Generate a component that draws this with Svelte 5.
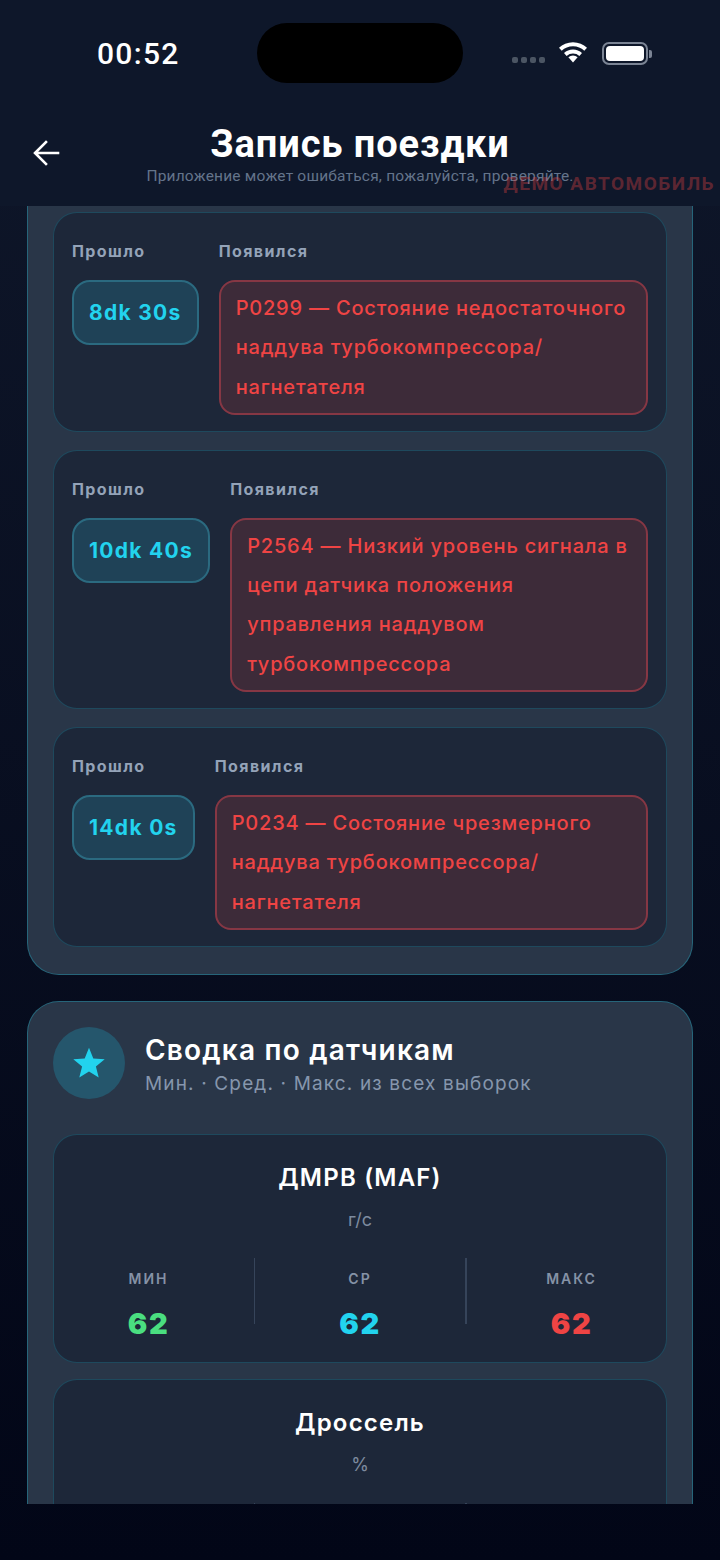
<script>
	const faults = [
		{ time: '8dk 30s', text: 'P0299 — Состояние недостаточного наддува турбокомпрессора/ нагнетателя' },
		{ time: '10dk 40s', text: 'P2564 — Низкий уровень сигнала в цепи датчика положения управления наддувом турбокомпрессора' },
		{ time: '14dk 0s', text: 'P0234 — Состояние чрезмерного наддува турбокомпрессора/ нагнетателя' }
	];

	const sensors = [
		{ name: 'ДМРВ (MAF)', unit: 'г/с', min: 62, avg: 62, max: 62 },
		{ name: 'Дроссель', unit: '%', min: 14, avg: 14, max: 14 }
	];
</script>

<div class="screen">
	<header>
		<div class="status">
			<span class="clock">00:52</span>
			<div class="island"></div>
			<div class="status-right">
				<div class="dots"><i></i><i></i><i></i><i></i></div>
				<svg class="wifi" viewBox="0 0 32 24" width="32" height="24">
					<path d="M16 23.5l-4.6-5.2a6.6 6.6 0 0 1 9.2 0z" fill="#fff" />
					<path d="M16 10.6c3.5 0 6.6 1.3 9 3.5l-2.6 2.9a9.6 9.6 0 0 0-12.8 0L7 14.1c2.400-2.200 5.500-3.500 9-3.500z" fill="#fff" />
					<path d="M16 3.200c5.500 0 10.400 2.100 14 5.600l-2.700 3A16.300 16.300 0 0 0 16 7.300c-4.400 0-8.300 1.700-11.300 4.500L2 8.800c3.600-3.500 8.500-5.600 14-5.600z" fill="#fff" />
				</svg>
				<div class="battery"><div class="charge"></div></div>
			</div>
		</div>
		<div class="nav">
			<button class="back" aria-label="Назад">
				<svg viewBox="0 0 28 28" width="28" height="28" fill="none" stroke="#fff" stroke-width="2.600" stroke-linecap="square">
					<path d="M26 14H3.500M14 3 3 14l11 11" />
				</svg>
			</button>
			<div class="titles">
				<h1>Запись поездки</h1>
				<p>Приложение может ошибаться, пожалуйста, проверяйте.</p>
			</div>
			<span class="demo">ДЕМО АВТОМОБИЛЬ</span>
		</div>
	</header>

	<main>
		<section class="card first">
			{#each faults as fault}
				<div class="row">
					<div class="col">
						<span class="label">Прошло</span>
						<div class="chip">{fault.time}</div>
					</div>
					<div class="col grow">
						<span class="label">Появился</span>
						<div class="fault">{fault.text}</div>
					</div>
				</div>
			{/each}
		</section>

		<section class="card">
			<div class="card-head">
				<div class="circle">
					<svg viewBox="0 0 32 32" width="32" height="32">
						<path d="M16 .8l4.300 10.600 11.400.8-8.800 7.300 2.800 11.100L16 24.500 6.300 30.600l2.800-11.100L.3 12.200l11.400-.8z" fill="#22d3ee" />
					</svg>
				</div>
				<div class="head-text">
					<h2>Сводка по датчикам</h2>
					<p class="sub">Мин. · Сред. · Макс. из всех выборок</p>
				</div>
			</div>

			{#each sensors as s}
				<div class="sensor">
					<h3>{s.name}</h3>
					<div class="unit">{s.unit}</div>
					<div class="stats">
						<div class="stat"><span>МИН</span><b class="green">{s.min}</b></div>
						<div class="divider"></div>
						<div class="stat"><span>СР</span><b class="cyan">{s.avg}</b></div>
						<div class="divider"></div>
						<div class="stat"><span>МАКС</span><b class="red">{s.max}</b></div>
					</div>
				</div>
			{/each}
		</section>
	</main>
	<div class="bottom"></div>
</div>

<style>
	:global(body) {
		margin: 0;
		background: #020617;
	}

	.screen {
		width: 720px;
		height: 1560px;
		overflow: hidden;
		display: flex;
		flex-direction: column;
		position: relative;
		background: linear-gradient(180deg, #0f172a 0%, #020617 100%);
		font-family: Inter, 'Noto Sans', sans-serif;
		color: #fff;
	}

	header {
		height: 206px;
		flex: none;
		background: #0e172a;
	}

	.status {
		height: 106px;
		display: flex;
		align-items: center;
		justify-content: space-between;
		padding: 0 72px 0 97px;
		position: relative;
		box-sizing: border-box;
	}

	.clock {
		font-family: Roboto, sans-serif;
		font-size: 30px;
		font-weight: 500;
		letter-spacing: 1.3px;
	}

	.island {
		position: absolute;
		left: 257px;
		top: 23px;
		width: 206px;
		height: 60px;
		border-radius: 30px;
		background: #000;
	}

	.status-right {
		display: flex;
		align-items: center;
	}

	.dots {
		display: flex;
		gap: 3px;
		margin-right: 12px;
		margin-top: 14px;
	}

	.dots i {
		width: 6px;
		height: 6px;
		border-radius: 2px;
		background: #4b5563;
	}

	.wifi {
		margin-right: 13px;
		margin-top: -4px;
	}

	.battery {
		border: 2px solid #7b8494;
		border-radius: 7px;
		padding: 2px;
		box-sizing: content-box;
		position: relative;
		width: 38px;
		height: 15px;
	}

	.battery::after {
		content: '';
		position: absolute;
		right: -6px;
		top: 6px;
		width: 3px;
		height: 8px;
		border-radius: 0 2px 2px 0;
		background: #7b8494;
	}

	.charge {
		width: 100%;
		height: 100%;
		background: #fff;
		border-radius: 4px;
	}

	.nav {
		position: relative;
		height: 100px;
	}

	.back {
		position: absolute;
		left: 32px;
		top: 33px;
		width: 28px;
		height: 28px;
		padding: 0;
		border: 0;
		background: none;
	}

	.titles {
		text-align: center;
		padding-top: 17px;
	}

	h1 {
		margin: 0;
		font-family: Roboto, sans-serif;
		font-size: 38px;
		line-height: 43px;
		font-weight: 700;
		letter-spacing: 0.9px;
	}

	.titles p {
		margin: 0;
		font-family: Roboto, sans-serif;
		font-size: 15.500px;
		line-height: 20px;
		color: #64748b;
		letter-spacing: 0.2px;
	}

	.demo {
		position: absolute;
		right: 5px;
		top: 67px;
		font-family: Roboto, sans-serif;
		font-size: 19px;
		line-height: 22px;
		font-weight: 700;
		letter-spacing: 1.5px;
		color: rgba(239, 68, 68, 0.36);
	}

	main {
		height: 1298px;
		flex: none;
		overflow: hidden;
		padding: 0 27px;
		display: flex;
		flex-direction: column;
		gap: 26px;
	}

	.bottom {
		flex: 1;
	}

	.card {
		flex: none;
		background: #293648;
		border: 1.500px solid rgba(34, 211, 238, 0.3);
		border-radius: 32px;
		padding: 25px 25px 0;
		box-sizing: border-box;
		display: flex;
		flex-direction: column;
	}

	.card.first {
		border-radius: 0 0 32px 32px;
		border-top: 0;
		padding-top: 6px;
		padding-bottom: 27px;
		gap: 18px;
	}

	.row {
		display: flex;
		gap: 20px;
		background: #1d2739;
		border: 1.500px solid rgba(34, 211, 238, 0.2);
		border-radius: 24px;
		padding: 26px 18px 16px;
	}

	.col {
		display: flex;
		flex-direction: column;
		align-items: flex-start;
		flex: none;
	}

	.col.grow {
		flex: 1;
		min-width: 0;
	}

	.label {
		font-size: 16px;
		line-height: 24px;
		font-weight: 700;
		letter-spacing: 1.4px;
		color: #94a3b8;
		margin-bottom: 17px;
	}

	.chip {
		padding: 0 15px;
		height: 65px;
		box-sizing: border-box;
		display: flex;
		align-items: center;
		background: #1f4257;
		border: 2px solid #2b6a80;
		border-radius: 18px;
		color: #22d3ee;
		font-size: 21px;
		font-weight: 700;
		letter-spacing: 1.3px;
		white-space: nowrap;
	}

	.fault {
		width: 100%;
		box-sizing: border-box;
		padding: 7px 15px 6px;
		background: #3d2b39;
		border: 2px solid #863744;
		border-radius: 16px;
		color: #ef4444;
		font-size: 20px;
		line-height: 39.300px;
		font-weight: 500;
		letter-spacing: 0.8px;
	}

	.card-head {
		display: flex;
		align-items: center;
		gap: 20px;
		margin-bottom: 34px;
	}

	.circle {
		width: 72px;
		height: 72px;
		border-radius: 50%;
		background: #25566c;
		display: flex;
		align-items: center;
		justify-content: center;
	}

	.head-text {
		padding-top: 6px;
	}

	h2 {
		margin: 0;
		font-size: 28px;
		line-height: 34px;
		font-weight: 600;
		letter-spacing: 1.2px;
	}

	.sub {
		margin: 0;
		font-size: 19px;
		line-height: 33px;
		letter-spacing: 1.15px;
		color: #8696ad;
	}

	.sensor {
		background: #1d2739;
		border: 1.500px solid rgba(34, 211, 238, 0.2);
		border-radius: 24px;
		padding: 27px 22px 22px;
		margin-bottom: 16px;
		text-align: center;
	}

	h3 {
		margin: 0;
		font-size: 24px;
		line-height: 32px;
		font-weight: 600;
		letter-spacing: 1.2px;
	}

	.unit {
		margin-top: 15px;
		font-size: 18px;
		line-height: 22px;
		color: #7d8b9f;
	}

	.stats {
		margin-top: 27px;
		display: flex;
		justify-content: space-around;
		align-items: flex-start;
	}

	.stat {
		width: 80px;
		padding-top: 12px;
		display: flex;
		flex-direction: column;
		align-items: center;
	}

	.stat span {
		font-size: 14px;
		line-height: 18px;
		font-weight: 600;
		letter-spacing: 2px;
		color: #8592a6;
	}

	.stat b {
		margin-top: 20px;
		font-size: 29px;
		line-height: 32px;
		font-weight: 900;
		letter-spacing: 1.5px;
	}

	.green {
		color: #4ade80;
	}

	.cyan {
		color: #22d3ee;
	}

	.red {
		color: #ef4444;
	}

	.divider {
		width: 1.500px;
		height: 66px;
		background: #36445a;
	}
</style>
